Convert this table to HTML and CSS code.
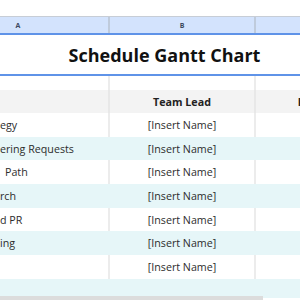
FILE: index.html
```html
<!DOCTYPE html>
<html lang="en">
<head>
  <meta charset="UTF-8" />
  <title>Schedule Gantt Chart</title>
  <link rel="stylesheet" href="styles.css">
</head>
<body>

  <div class="sheet">
    <div class="col-heads">
      <div class="col-head">A</div>
      <div class="col-head">B</div>
      <div class="col-head"></div>
    </div>

    <div class="title-row">
      <h1>Schedule Gantt Chart</h1>
    </div>

    <div class="row spacer">
      <div class="cell"></div>
      <div class="cell"></div>
      <div class="cell"></div>
    </div>

    <div class="row head">
      <div class="cell"></div>
      <div class="cell center">Team Lead</div>
      <div class="cell center">Resources</div>
    </div>

    <div class="row">
      <div class="cell label">egy</div>
      <div class="cell center">[Insert Name]</div>
      <div class="cell"></div>
    </div>
    <div class="row alt">
      <div class="cell label">ering Requests</div>
      <div class="cell center">[Insert Name]</div>
      <div class="cell"></div>
    </div>
    <div class="row">
      <div class="cell label indent">Path</div>
      <div class="cell center">[Insert Name]</div>
      <div class="cell"></div>
    </div>
    <div class="row alt">
      <div class="cell label">rch</div>
      <div class="cell center">[Insert Name]</div>
      <div class="cell"></div>
    </div>
    <div class="row">
      <div class="cell label">d PR</div>
      <div class="cell center">[Insert Name]</div>
      <div class="cell"></div>
    </div>
    <div class="row alt">
      <div class="cell label">ing</div>
      <div class="cell center">[Insert Name]</div>
      <div class="cell"></div>
    </div>
    <div class="row">
      <div class="cell label"></div>
      <div class="cell center">[Insert Name]</div>
      <div class="cell"></div>
    </div>
    <div class="row alt last">
      <div class="cell"></div>
      <div class="cell"></div>
      <div class="cell"></div>
    </div>
  </div>

  <div class="scrollbar"></div>

</body>
</html>
```

FILE: styles.css
```css
* {
  margin: 0;
  padding: 0;
  box-sizing: border-box;
}

body {
  background: #fff;
  font-family: 'Open Sans', sans-serif;
  color: #2d2d2d;
  overflow: hidden;
  width: 300px;
  height: 300px;
  position: relative;
}

.sheet {
  margin-top: 16px;
  margin-left: -72px;
  width: 468px;
}

.col-heads {
  display: grid;
  grid-template-columns: 182px 146px 140px;
  height: 19px;
  background: #d3e3fd;
  border-top: 1px solid #c7cdd6;
  border-bottom: 2px solid #5f93e8;
}

.col-head {
  display: flex;
  align-items: center;
  justify-content: center;
  font-size: 7px;
  font-weight: bold;
  color: #3c4a60;
  border-right: 2px solid #bfcbdc;
}

.title-row {
  height: 41px;
  display: flex;
  align-items: center;
  padding-left: 72px;
  border-bottom: 2px solid #5f93e8;
}

h1 {
  width: 329px;
  text-align: center;
  font-size: 18px;
  font-weight: bold;
  color: #111;
}

.row {
  display: grid;
  grid-template-columns: 182px 146px 140px;
  height: 23.7px;
  font-size: 10.7px;
}

.row.spacer {
  height: 14px;
}

.row.head {
  height: 23px;
  background: #f3f3f3;
  font-weight: bold;
  color: #222;
}

.row.alt {
  background: #e6f6f8;
}

.row.last {
  height: 19px;
}

.cell {
  display: flex;
  align-items: center;
  border-right: 2px solid #ececec;
  white-space: nowrap;
  overflow: hidden;
}

.row.alt .cell {
  border-right-color: #e6f6f8;
}

.row.head .cell {
  border-right-color: #e8e8e8;
}

.cell.center {
  justify-content: center;
}

.cell.label {
  padding-left: 72px;
}

.cell.label.indent {
  padding-left: 77px;
}

.scrollbar {
  position: absolute;
  left: 0;
  bottom: 0;
  width: 263px;
  height: 4px;
  background: #dcdcdc;
}
```
